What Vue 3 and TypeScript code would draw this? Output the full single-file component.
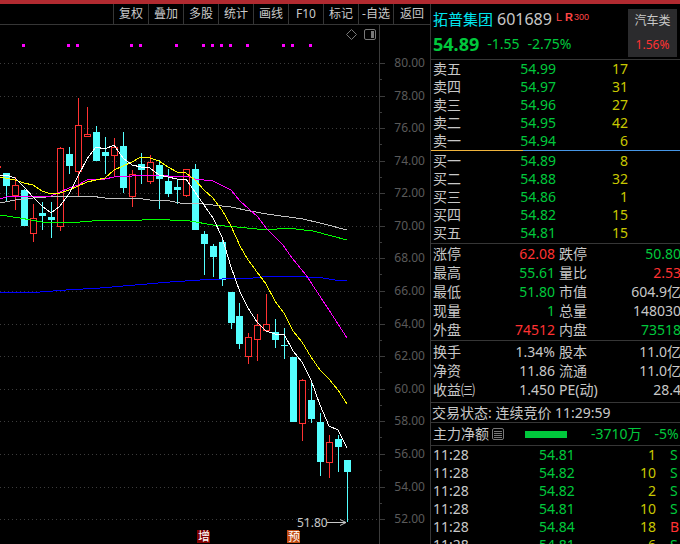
<script setup lang="ts">
type Tone = 'up' | 'down' | 'flat'
type Candle = [x: number, high: number, top: number, bottom: number, low: number, rising?: 1]

interface Level { label: string; price: string; volume: number }
interface Stat { label: string; value: string; tone: Tone }
interface Trade { id: number; time: string; price: string; volume: number; side: 'S' | 'B' }

const tools: string[] = ['复权', '叠加', '多股', '统计', '画线', 'F10', '标记', '-自选', '返回']

const asks: Level[] = [
  { label: '卖五', price: '54.99', volume: 17 },
  { label: '卖四', price: '54.97', volume: 31 },
  { label: '卖三', price: '54.96', volume: 27 },
  { label: '卖二', price: '54.95', volume: 42 },
  { label: '卖一', price: '54.94', volume: 6 },
]
const bids: Level[] = [
  { label: '买一', price: '54.89', volume: 8 },
  { label: '买二', price: '54.88', volume: 32 },
  { label: '买三', price: '54.86', volume: 1 },
  { label: '买四', price: '54.82', volume: 15 },
  { label: '买五', price: '54.81', volume: 15 },
]

const dayStats: Stat[] = [
  { label: '涨停', value: '62.08', tone: 'up' },
  { label: '跌停', value: '50.80', tone: 'down' },
  { label: '最高', value: '55.61', tone: 'down' },
  { label: '量比', value: '2.53', tone: 'up' },
  { label: '最低', value: '51.80', tone: 'down' },
  { label: '市值', value: '604.9亿', tone: 'flat' },
  { label: '现量', value: '1', tone: 'down' },
  { label: '总量', value: '148030', tone: 'flat' },
  { label: '外盘', value: '74512', tone: 'up' },
  { label: '内盘', value: '73518', tone: 'down' },
]
const baseStats: Stat[] = [
  { label: '换手', value: '1.34%', tone: 'flat' },
  { label: '股本', value: '11.0亿', tone: 'flat' },
  { label: '净资', value: '11.86', tone: 'flat' },
  { label: '流通', value: '11.0亿', tone: 'flat' },
  { label: '收益㈢', value: '1.450', tone: 'flat' },
  { label: 'PE(动)', value: '28.4', tone: 'flat' },
]

const trades: Trade[] = [
  { id: 1, time: '11:28', price: '54.81', volume: 1, side: 'S' },
  { id: 2, time: '11:28', price: '54.82', volume: 10, side: 'S' },
  { id: 3, time: '11:28', price: '54.82', volume: 2, side: 'S' },
  { id: 4, time: '11:28', price: '54.81', volume: 10, side: 'S' },
  { id: 5, time: '11:28', price: '54.84', volume: 18, side: 'B' },
  { id: 6, time: '11:28', price: '54.81', volume: 6, side: 'S' },
]

/* Price axis: 80.00 down to 52.00 in steps of 2. */
const axis = Array.from({ length: 15 }, (_, i) => ({
  label: (80 - i * 2).toFixed(2),
  y: Math.round(63 + i * 32.58),
}))

const signals: number[] = [22, 67, 76, 130, 139, 175, 202, 211, 220, 229, 246, 282, 291, 309]

const candles: Candle[] = [
  [-3, 166, 166, 168, 168, 1],
  [6, 173, 173, 186, 202],
  [15, 177, 185, 196, 210, 1],
  [24, 189, 190, 226, 226],
  [33, 204, 218, 234, 242, 1],
  [42, 202, 213, 216, 230],
  [51, 202, 217, 220, 238],
  [60, 147, 148, 227, 231, 1],
  [69, 147, 154, 166, 174],
  [78, 98, 125, 172, 196, 1],
  [87, 107, 134, 137, 137, 1],
  [96, 126, 132, 161, 161],
  [105, 137, 152, 156, 174],
  [114, 138, 147, 156, 176, 1],
  [123, 132, 146, 188, 193],
  [132, 170, 174, 197, 207, 1],
  [141, 153, 164, 170, 184],
  [150, 155, 162, 182, 184, 1],
  [159, 160, 165, 179, 209],
  [168, 169, 181, 194, 197],
  [177, 179, 187, 190, 204],
  [186, 169, 169, 196, 197, 1],
  [195, 164, 169, 230, 230],
  [204, 231, 234, 244, 275],
  [213, 244, 246, 257, 277],
  [222, 239, 242, 280, 286],
  [231, 292, 292, 323, 329],
  [239, 303, 316, 344, 349],
  [248, 333, 337, 357, 364, 1],
  [257, 314, 325, 340, 361, 1],
  [266, 294, 324, 331, 331, 1],
  [275, 319, 332, 340, 348],
  [284, 328, 345, 346, 359],
  [293, 357, 357, 422, 422],
  [302, 379, 380, 424, 441, 1],
  [311, 381, 400, 419, 423],
  [320, 413, 422, 462, 476],
  [329, 435, 442, 463, 478, 1],
  [338, 435, 439, 447, 472],
  [347, 460, 460, 472, 522],
]

const averages: { name: string; points: string }[] = [
  { name: 'ma-gray', points: '0,203 15,200 33,198 60,196 90,196 105,198 135,198 150,200 170,201 180,203 195,203 213,205 231,207 250,211 267,214 303,219 320,223 347,230' },
  { name: 'ma-blue', points: '0,292 40,292 66,290 100,288 135,285 170,282 200,280 222,279 253,278 272,276 288,276 323,278 335,280 347,280' },
  { name: 'ma-green', points: '0,215 20,218 42,222 80,222 105,220 135,221 150,219 170,220 190,221 213,225 237,227 257,229 277,229 287,228 313,231 347,240' },
  { name: 'ma-magenta', points: '0,199 6,197 15,196 51,196 60,192 69,188 78,185 87,180 96,179 105,179 114,177 123,176 132,176 141,175 159,175 177,177 186,176 195,179 213,181 231,190 240,201 249,209 258,217 267,229 283,245 292,258 306,275 329,310 347,338' },
  { name: 'ma-yellow', points: '0,177 15,180 24,183 33,185 42,191 51,194 60,193 69,190 78,186 87,182 96,180 105,178 114,170 123,166 132,162 141,157 150,158 159,161 168,167 177,172 186,173 195,180 204,190 213,198 222,210 231,226 240,246 248,260 257,272 266,284 275,301 284,313 293,331 302,342 311,357 320,370 329,379 338,390 347,404' },
  { name: 'ma-white', points: '0,175 6,175 15,178 24,187 33,197 42,206 51,213 60,206 69,194 78,176 87,159 96,147 105,149 114,145 123,158 132,165 141,167 150,168 159,175 168,177 177,179 186,179 195,192 204,205 213,218 222,237 231,267 240,292 248,308 257,322 266,331 275,334 284,334 293,351 302,362 311,380 320,405 329,426 338,430 347,448' },
]

const badges = [
  { text: '增', x: 197, kind: 'badge-red' },
  { text: '预', x: 287, kind: 'badge-orange' },
]
</script>

<template>
  <div class="app">
    <main class="chart-pane">
      <nav class="toolbar" aria-label="图表工具">
        <button v-for="tool in tools" :key="tool" type="button">{{ tool }}</button>
      </nav>
      <svg class="chart" viewBox="0 25 430 519" preserveAspectRatio="xMinYMin meet" role="img">
        <g class="grid">
          <template v-for="(tick, i) in axis" :key="tick.label">
            <path class="dots" :d="`M0 ${tick.y + 0.5}H379`" />
            <path class="rule" :d="`M379 ${tick.y + 0.5}h6`" />
            <path v-if="i < axis.length - 1" class="rule" :d="`M379 ${tick.y + 16.5}h3`" />
          </template>
          <path class="rule" d="M379.5 25V544" />
        </g>
        <text v-for="tick in axis" :key="tick.label" class="axis-label" x="425" :y="tick.y + 4" text-anchor="end">{{ tick.label }}</text>

        <path class="tool-icon" d="M351.500 29.500l5 5-5 5-5-5z" />
        <rect class="tool-icon" x="364.500" y="29.500" width="11" height="10" rx="1.500" />
        <rect class="tool-fill" x="371" y="31" width="3" height="7" />

        <rect v-for="x in signals" :key="x" class="signal" :x="x" y="44" width="3" height="3" />

        <g class="candles">
          <g v-for="[x, high, top, bottom, low, rising] in candles" :key="x" :class="rising ? 'rise' : 'fall'">
            <path :d="`M${x + 0.5} ${high}V${top}M${x + 0.5} ${bottom}V${low}`" />
            <rect v-if="rising" :x="x - 2.5" :y="top + 0.5" width="6" :height="bottom - top - 1" />
            <rect v-else class="solid" :x="x - 3" :y="top" width="7" :height="bottom - top" />
          </g>
        </g>

        <polyline v-for="ma in averages" :key="ma.name" class="ma" :class="ma.name" :points="ma.points" />

        <text class="low-label" x="297" y="527">51.80</text>
        <path class="low-arrow" d="M327 522.500H346M340 519.500l6 3-6 3" />

        <g v-for="badge in badges" :key="badge.text">
          <path :class="badge.kind" :d="`M${badge.x} 530h12l1 2v11h-13z`" />
          <text class="badge-text" :x="badge.x + 7" y="541" text-anchor="middle">{{ badge.text }}</text>
        </g>
      </svg>
    </main>

    <aside class="quote">
      <header class="summary">
        <div class="identity">
          <h1><span class="name">拓普集团</span><span class="code">601689</span><small><span>L</span><b>R</b><span class="index">300</span></small></h1>
          <p class="down"><strong>54.89</strong><span>-1.55</span><span>-2.75%</span></p>
        </div>
        <a class="sector" href="#sector"><span>汽车类</span><span class="up">1.56%</span></a>
      </header>

      <table class="book">
        <tbody>
          <tr v-for="row in asks" :key="row.label">
            <th scope="row">{{ row.label }}</th><td class="down">{{ row.price }}</td><td class="volume">{{ row.volume }}</td><td></td>
          </tr>
        </tbody>
      </table>
      <div class="balance"><i></i></div>
      <table class="book bids">
        <tbody>
          <tr v-for="row in bids" :key="row.label">
            <th scope="row">{{ row.label }}</th><td class="down">{{ row.price }}</td><td class="volume">{{ row.volume }}</td><td></td>
          </tr>
        </tbody>
      </table>

      <dl class="stats day">
        <div v-for="stat in dayStats" :key="stat.label"><dt>{{ stat.label }}</dt><dd :class="stat.tone">{{ stat.value }}</dd></div>
      </dl>
      <dl class="stats base">
        <div v-for="stat in baseStats" :key="stat.label"><dt>{{ stat.label }}</dt><dd :class="stat.tone">{{ stat.value }}</dd></div>
      </dl>

      <p class="status">交易状态: 连续竞价 11:29:59</p>

      <div class="flow">
        <span>主力净额</span>
        <svg class="list-icon" width="12" height="12" viewBox="0 0 12 12" aria-hidden="true">
          <rect x="0.500" y="0.500" width="11" height="11" rx="1.500" />
          <path d="M2 3.500h8M2 5.500h8M2 7.500h8M2 9.500h8" />
        </svg>
        <i class="flow-bar"></i>
        <span class="down amount">-3710万</span>
        <span class="down">-5%</span>
      </div>

      <table class="trades">
        <tbody>
          <tr v-for="trade in trades" :key="trade.id">
            <td>{{ trade.time }}</td>
            <td class="down">{{ trade.price }}</td>
            <td class="volume">{{ trade.volume }}</td>
            <td :class="trade.side === 'B' ? 'up' : 'down'">{{ trade.side }}</td>
          </tr>
        </tbody>
      </table>
    </aside>
  </div>
</template>

<style>
body {
  background: #000;
  overflow: hidden;
}
</style>

<style scoped>
.app {
  box-sizing: border-box;
  display: grid;
  grid-template-columns: minmax(0, 1fr) 250px;
  height: 100vh;
  overflow: hidden;
  border-top: 4px solid #b02a30;
  background: #000;
  color: #c8c8c8;
  font: 14px/18px "Noto Sans", "Noto Sans CJK SC", sans-serif;
}
h1, p, dl, dd {
  margin: 0;
  font-weight: 400;
}
.up { color: #ff3232; }
.down { color: #00c83c; }
.volume { color: #c8c800; }

.chart-pane {
  display: flex;
  flex-direction: column;
  min-width: 0;
  min-height: 0;
}
.toolbar {
  display: flex;
  justify-content: flex-end;
  height: 20px;
  flex: none;
  border-bottom: 1px solid #363636;
}
.toolbar button {
  box-sizing: border-box;
  width: 35px;
  padding: 0;
  border: 0;
  border-left: 1px solid #363636;
  background: none;
  color: #c8c8c8;
  font: 12px/18px "Noto Sans", "Noto Sans CJK SC", sans-serif;
  white-space: nowrap;
  cursor: pointer;
}
.toolbar button:last-child { width: 37px; }
.chart {
  display: block;
  width: 100%;
  flex: 1;
  min-height: 0;
}
.chart path, .chart rect, .chart polyline {
  fill: none;
  shape-rendering: crispEdges;
}
.chart .dots { stroke: #3c3c3c; stroke-dasharray: 1 3; }
.chart .rule { stroke: #3c3c3c; }
.axis-label { fill: #5a5a5a; font-size: 12px; }
.chart .tool-icon { stroke: #787878; shape-rendering: auto; }
.chart .tool-fill { fill: #787878; }
.chart .signal { fill: #ff00ff; }
.rise { stroke: #ff3232; }
.chart .rise rect { fill: #000; }
.fall { stroke: #54ffff; }
.chart .fall .solid { fill: #54ffff; stroke: none; }
.ma-gray { stroke: #c0c0c0; }
.ma-blue { stroke: #0000ff; }
.ma-green { stroke: #00ff00; }
.ma-magenta { stroke: #ff00ff; }
.ma-yellow { stroke: #ffff00; }
.ma-white { stroke: #fff; }
.low-label { fill: #c8c8c8; font-size: 12px; }
.chart .low-arrow { stroke: #c8c8c8; shape-rendering: auto; }
.chart .badge-red { fill: #800000; }
.chart .badge-orange { fill: #c04a10; }
.badge-text { fill: #fff; font-size: 12px; }

.quote {
  border-left: 1px solid #363636;
  overflow: hidden;
  white-space: nowrap;
}
.summary {
  display: flex;
  justify-content: space-between;
  padding: 5px 3px 2px 2px;
  border-bottom: 1px solid #363636;
}
.identity {
  display: flex;
  flex-direction: column;
  gap: 2px;
}
.identity h1 {
  display: flex;
  gap: 4px;
  line-height: 20px;
}
.name { color: #00e5ee; font-size: 15px; }
.code { font-size: 16px; }
.identity small {
  display: flex;
  gap: 3px;
  color: #ff4646;
  font: 11px/16px "Liberation Sans", sans-serif;
}
.identity small b { margin-right: -2px; }
.index { font-size: 9px; }
.identity p {
  display: flex;
  gap: 8px;
  line-height: 26px;
}
.identity strong { font-size: 18px; }
.sector {
  display: flex;
  flex-direction: column;
  align-items: center;
  justify-content: space-between;
  box-sizing: border-box;
  width: 49px;
  height: 48px;
  padding: 3px 0;
  background: #2b2b2d;
  color: #c8c8c8;
  font-size: 12px;
  text-decoration: none;
}

table {
  width: 100%;
  border-collapse: collapse;
  table-layout: fixed;
}
th, td {
  height: 18px;
  padding: 0;
  text-align: left;
  font-weight: 400;
}
.book th { width: 36px; padding-left: 2px; }
.book td { text-align: right; }
.book td:nth-child(2) { width: 87px; }
.book td:nth-child(3) { width: 72px; }
.bids { margin-bottom: 1px; }
.balance {
  height: 1px;
  margin-bottom: 1px;
  background: #4696e6;
}
.balance i {
  display: block;
  width: 37%;
  height: 1px;
  background: #f0b43c;
}

.stats {
  display: grid;
  grid-template-columns: 124px 124px;
  column-gap: 2px;
  margin-right: -1px;
  border-top: 1px solid #363636;
  line-height: 19px;
}
.stats div {
  display: flex;
  justify-content: space-between;
  padding-left: 2px;
}
.day { padding-bottom: 1px; }
.base { padding: 1px 0 3px; }
.status {
  padding-left: 1px;
  border-top: 1px solid #363636;
  line-height: 19px;
}
.flow {
  display: flex;
  align-items: center;
  height: 22px;
  padding-left: 2px;
  border-top: 1px solid #363636;
  border-bottom: 1px solid #363636;
}
.list-icon {
  margin: 0 21px 0 3px;
  fill: none;
  stroke: #787878;
}
.flow-bar {
  width: 42px;
  height: 7px;
  background: #00c83c;
}
.amount { margin: 0 13px 0 24px; }

.trades td:nth-child(1) { width: 106px; padding-left: 2px; }
.trades td:nth-child(2) { width: 50px; }
.trades td:nth-child(3) { width: 67px; text-align: right; }
.trades td:nth-child(4) { padding-left: 14px; }
</style>
